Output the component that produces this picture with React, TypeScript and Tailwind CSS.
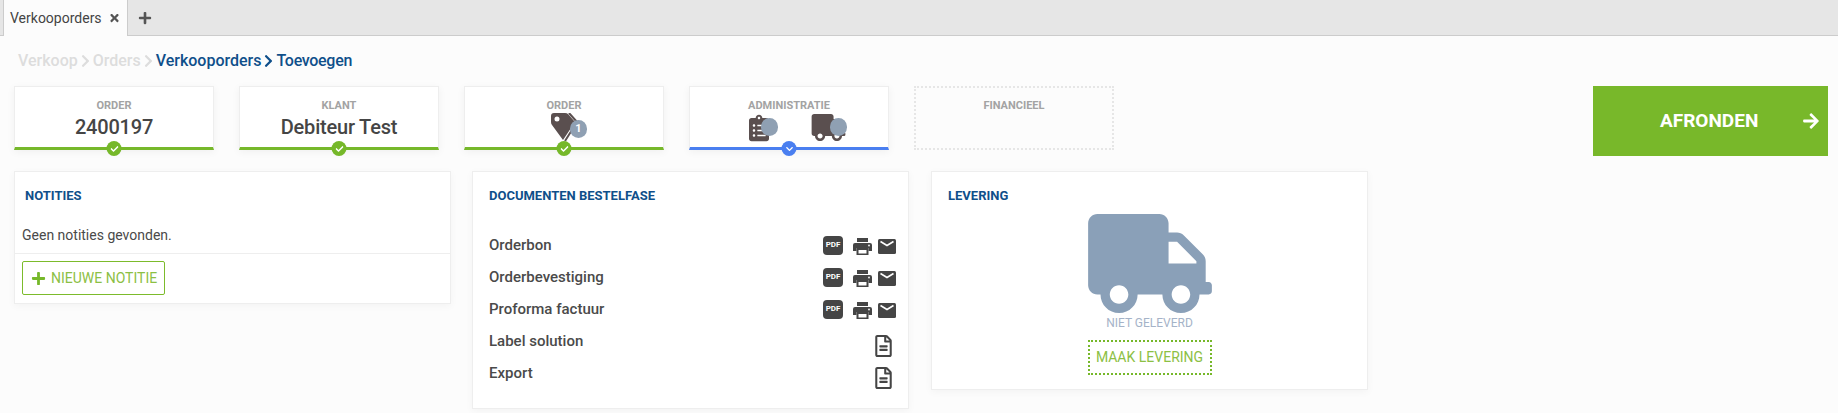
import React from 'react';
import { FaTruck, FaRegFileAlt, FaClipboardList, FaCheck, FaChevronDown, FaPlus, FaTimes, FaChevronRight, FaArrowRight } from 'react-icons/fa';

const Badge: React.FC<{ blue?: boolean }> = ({ blue }) => (
  <span
    className={`absolute left-1/2 bottom-[-9px] -translate-x-1/2 w-[15px] h-[15px] rounded-full flex items-center justify-center text-white ${
      blue ? 'bg-[#4a7ff0]' : 'bg-[#76b82a]'
    }`}
  >
    {blue ? <FaChevronDown className="w-[8px] h-[8px]" /> : <FaCheck className="w-[8px] h-[8px]" />}
  </span>
);

const Step: React.FC<{ label: string; value?: string; blue?: boolean; children?: React.ReactNode }> = ({
  label,
  value,
  blue,
  children,
}) => (
  <div
    className={`relative w-[200px] h-[64px] bg-white border border-[#eeeeee] border-b-[3px] shadow-[0_2px_8px_rgba(0,0,0,0.05)] text-center ${
      blue ? 'border-b-[#4a7ff0]' : 'border-b-[#76b82a]'
    }`}
  >
    <div className="mt-[12px] text-[11px] leading-[13px] font-bold text-[#a3a3a3]">{label}</div>
    {value && <div className="mt-[3px] text-[20px] leading-[24px] font-medium tracking-[-0.2px] text-[#454545]">{value}</div>}
    {children}
    <Badge blue={blue} />
  </div>
);

const Dot: React.FC<{ className: string }> = ({ className }) => (
  <span className={`absolute w-[17px] h-[18px] rounded-full bg-[#8fa0b3] ${className}`} />
);

const TagIcon = () => (
  <svg viewBox="0 0 27 29" className="absolute left-[86px] top-[26px] w-[27px] h-[29px]">
    <path
      fill="#5a4f4f"
      fillRule="evenodd"
      d="M3 0H14Q16 0 17 1L24 9L12 27L1 12Q0 11 0 9V3Q0 0 3 0ZM6 3.5A2.5 2.5 0 1 0 6 8.5A2.5 2.5 0 1 0 6 3.5Z"
    />
    <path d="M18 0L26 9L14 28" fill="none" stroke="#5a4f4f" strokeWidth="2" />
  </svg>
);

const PdfIcon = () => (
  <span className="w-[20px] h-[19px] rounded-[4px] bg-[#454545] flex items-start justify-center pt-[4px] text-white text-[8px] leading-[9px] font-bold">
    PDF
  </span>
);

const PrintIcon = () => (
  <svg viewBox="0 0 19 17" className="ml-[10px] mt-[3px] w-[19px] h-[17px]">
    <path fill="#454545" d="M4 0H15V4H4Z" />
    <path fill="#454545" d="M2 5H17Q19 5 19 7V13H15.5V10H3.5V13H0V7Q0 5 2 5Z" />
    <path fill="#454545" d="M3.5 10H15.5V17H3.5Z" />
    <path fill="#fff" d="M5.5 12H13.5V15.5H5.5Z" />
    <circle cx="16" cy="7.5" r="0.9" fill="#fff" />
  </svg>
);

const MailIcon = () => (
  <svg viewBox="0 0 18 15" className="w-[18px] h-[15px]">
    <rect width="18" height="15" rx="1.5" fill="#454545" />
    <path d="M2.5 2.5L9 6.5L15.5 2.5" fill="none" stroke="#fff" strokeWidth="1.6" />
  </svg>
);

const DocRow: React.FC<{ label: string; plain?: boolean }> = ({ label, plain }) => (
  <div className="h-[32px] flex items-start justify-between">
    <span className="mt-[-2px] text-[15px] leading-[20px] font-medium text-[#4a4a4a]">{label}</span>
    {plain ? (
      <FaRegFileAlt className="mt-[2px] w-[17px] h-[22px] text-[#454545]" />
    ) : (
      <div className="flex items-center mr-[-4px] mt-[-2px]">
        <PdfIcon />
        <PrintIcon />
        <span className="ml-[6px] mt-[3px]">
          <MailIcon />
        </span>
      </div>
    )}
  </div>
);

const Card: React.FC<{ className: string; children: React.ReactNode }> = ({ className, children }) => (
  <div className={`w-[437px] bg-white border border-[#eeeeee] shadow-[0_2px_8px_rgba(0,0,0,0.04)] ${className}`}>
    {children}
  </div>
);

const Title: React.FC<{ children: React.ReactNode }> = ({ children }) => (
  <div className="text-[13px] leading-[16px] font-bold text-[#0f4f8a]">{children}</div>
);

export default function App() {
  return (
    <div className="w-[1838px] h-[413px] overflow-hidden bg-[#fcfcfc] font-['Roboto',sans-serif] text-[#454545]">
      {/* Tab bar */}
      <div className="h-[36px] bg-[#e6e6e6] border-b border-[#cccccc] pl-[3px] flex items-start">
        <div className="w-[125px] h-[36px] bg-[#fcfcfc] border-r border-l border-[#cccccc] pl-[6px] flex items-center">
          <span className="text-[14px] text-[#444444]">Verkooporders</span>
          <FaTimes className="ml-[7px] w-[11px] h-[12px] text-[#555555]" />
        </div>
        <FaPlus className="ml-[10px] mt-[11px] w-[14px] h-[14px] text-[#555555]" />
      </div>

      <div className="pl-[14px] pr-[10px]">
        {/* Breadcrumb */}
        <div className="pt-[15px] pl-[4px] h-[50px] flex items-start text-[16px] leading-[19px] font-medium text-[#0f4f8a]">
          <span className="text-[#dddddd]">Verkoop</span>
          <FaChevronRight className="mx-[1px] mt-[3px] w-[13px] h-[14px] text-[#dddddd]" />
          <span className="text-[#dddddd]">Orders</span>
          <FaChevronRight className="mx-[1px] mt-[3px] w-[13px] h-[14px] text-[#dddddd]" />
          <span>Verkooporders</span>
          <FaChevronRight className="mx-[1px] mt-[3px] w-[13px] h-[14px]" />
          <span className="tracking-[-0.3px]">Toevoegen</span>
        </div>

        {/* Steps */}
        <div className="flex items-start">
          <div className="flex gap-[25px]">
            <Step label="ORDER" value="2400197" />
            <Step label="KLANT" value="Debiteur Test" />
            <Step label="ORDER">
              <TagIcon />
              <Dot className="left-[105px] top-[33px]" />
              <span className="absolute left-[105px] top-[34px] w-[17px] h-[16px] text-center text-[11px] leading-[16px] font-bold text-white">
                1
              </span>
            </Step>
            <Step label="ADMINISTRATIE" blue>
              <FaClipboardList className="absolute left-[59px] top-[27px] w-[20px] h-[28px] text-[#5a4f4f]" />
              <Dot className="left-[71px] top-[31px]" />
              <FaTruck className="absolute left-[121px] top-[27px] w-[35px] h-[27px] text-[#5a4f4f]" />
              <Dot className="left-[140px] top-[31px]" />
            </Step>
            <div className="w-[200px] h-[64px] border-2 border-dotted border-[#e6e6e6] text-center">
              <div className="mt-[11px] text-[11px] leading-[13px] font-bold text-[#a3a3a3]">FINANCIEEL</div>
            </div>
          </div>
          <button className="ml-auto w-[235px] h-[70px] bg-[#78b82a] text-white flex items-center pl-[67px]">
            <span className="text-[19px] leading-[24px] font-bold">AFRONDEN</span>
            <FaArrowRight className="ml-[44px] w-[18px] h-[18px]" />
          </button>
        </div>

        {/* Cards */}
        <div className="flex items-start mt-[15px]">
          <Card className="h-[133px]">
            <div className="pt-[16px] pl-[10px] h-[53px]">
              <Title>NOTITIES</Title>
            </div>
            <div className="pl-[7px] h-[29px] text-[14px] leading-[20px] text-[#4a4a4a] border-b border-[#eeeeee]">
              Geen notities gevonden.
            </div>
            <div className="pl-[7px] pt-[7px]">
              <button className="w-[143px] h-[34px] border border-[#7cbb2b] rounded-[2px] flex items-center pl-[8px] text-[14px] text-[#8cc044]">
                <FaPlus className="w-[15px] h-[15px] text-[#76b82a]" />
                <span className="ml-[5px]">NIEUWE NOTITIE</span>
              </button>
            </div>
          </Card>

          <Card className="h-[238px] px-[16px] ml-[21px]">
            <div className="pt-[16px] h-[65px]">
              <Title>DOCUMENTEN BESTELFASE</Title>
            </div>
            <DocRow label="Orderbon" />
            <DocRow label="Orderbevestiging" />
            <DocRow label="Proforma factuur" />
            <DocRow label="Label solution" plain />
            <DocRow label="Export" plain />
          </Card>

          <Card className="h-[219px] ml-[22px]">
            <div className="pt-[16px] pl-[16px]">
              <Title>LEVERING</Title>
            </div>
            <div className="flex flex-col items-center mt-[10px]">
              <FaTruck className="w-[126px] h-[99px] text-[#8aa0b8]" />
              <div className="mt-[2px] text-[12px] leading-[16px] text-[#a5b3c8]">NIET GELEVERD</div>
              <button className="mt-[9px] w-[124px] h-[35px] border-2 border-dotted border-[#76b82a] text-[14px] text-[#8cc044]">
                MAAK LEVERING
              </button>
            </div>
          </Card>
        </div>
      </div>
    </div>
  );
}
